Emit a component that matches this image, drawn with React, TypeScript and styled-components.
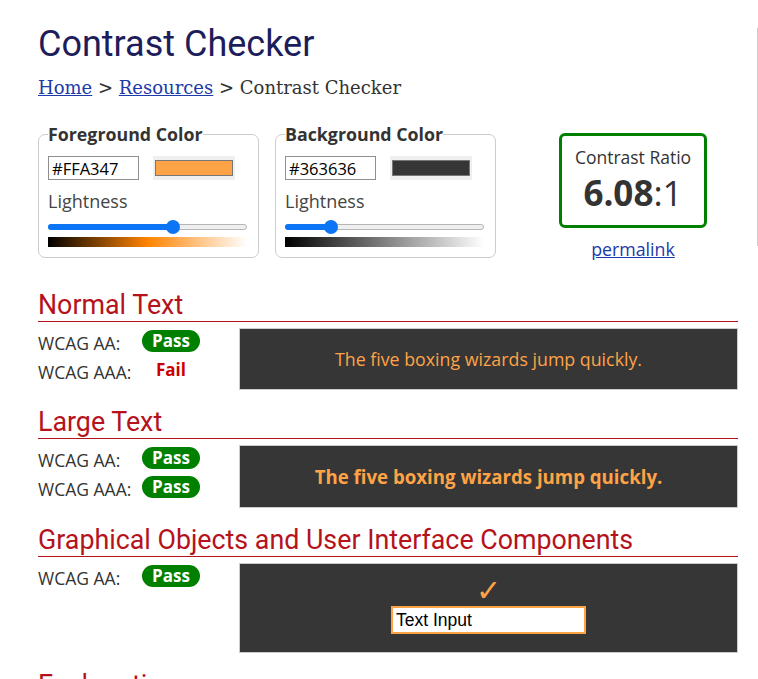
import React from 'react';
import styled, { createGlobalStyle } from 'styled-components';

const GlobalStyle = createGlobalStyle`
    body {
        margin: 0;
        background: #ffffff;
        font-family: "Open Sans", "Liberation Sans", sans-serif;
        color: #333333;
    }
`;

const Wrapper = styled.div`
    display: flex;
    align-items: flex-start;
`;

const Main = styled.main`
    width: 700px;
    margin-left: 38px;
    padding-top: 25px;
`;

const Sidebar = styled.aside`
    margin-top: 28px;
    margin-left: 19px;
    height: 218px;
    border-left: 1px solid #cccccc;
`;

const Title = styled.h1`
    margin: 0;
    font-family: Roboto, "Liberation Sans", sans-serif;
    font-weight: 400;
    font-size: 36px;
    line-height: 38px;
    color: #1d1d5c;
`;

const Crumbs = styled.nav`
    margin-top: 13px;
    font-family: "DejaVu Serif", "Liberation Serif", serif;
    font-size: 18px;
    line-height: 24px;
    color: #333333;
    a {
        color: #1c3aa9;
    }
`;

const Tools = styled.div`
    display: flex;
    align-items: flex-start;
    gap: 16px;
    margin-top: 22px;
`;

const Picker = styled.fieldset`
    margin: 0;
    width: 201px;
    padding: 10px 9px 10px;
    border: 1px solid #cccccc;
    border-radius: 7px;
    > legend {
        padding: 0;
        font-weight: 700;
        font-size: 17.8px;
        line-height: 24px;
        color: #333333;
    }
`;

const ColorRow = styled.div`
    display: flex;
    gap: 14px;
`;

const HexInput = styled.input`
    box-sizing: border-box;
    width: 91px;
    height: 24px;
    padding: 0 3px;
    border: 1px solid #8f8f8f;
    font-family: "Open Sans", sans-serif;
    font-size: 16.5px;
    color: #000000;
`;

const Swatch = styled.div<{ color: string }>`
    box-sizing: border-box;
    width: 82px;
    height: 24px;
    padding: 4px 2px;
    background: #efefef;
    > div {
        height: 100%;
        box-sizing: border-box;
        border: 1px solid #777777;
        background: ${({ color }) => color};
    }
`;

const Label = styled.div`
    margin-top: 9px;
    font-size: 18px;
    line-height: 24px;
    color: #444444;
`;

const Slider = styled.div`
    position: relative;
    height: 14px;
    margin-top: 7px;
    width: 199px;
`;

const Track = styled.div`
    position: absolute;
    left: 0;
    right: 0;
    top: 4px;
    height: 6px;
    box-sizing: border-box;
    border: 1px solid #b5b5b5;
    border-radius: 4px;
    background: #efefef;
`;

const Fill = styled.div`
    position: absolute;
    left: 0;
    top: 4px;
    height: 6px;
    border-radius: 4px;
    background: #0b75f5;
`;

const Thumb = styled.div`
    position: absolute;
    top: 0;
    width: 14px;
    height: 14px;
    margin-left: -7px;
    border-radius: 50%;
    background: #0b75f5;
`;

const Ramp = styled.div<{ mid: string }>`
    margin-top: 3px;
    height: 10px;
    width: 199px;
    background: linear-gradient(to right, #000000, ${({ mid }) => mid}, #ffffff);
`;

const RatioColumn = styled.div`
    margin-top: 11px;
    margin-left: 47px;
    width: 148px;
    text-align: center;
`;

const RatioBox = styled.div`
    border: 3px solid #008000;
    border-radius: 6px;
    padding: 10px 0;
    > p {
        margin: 0;
        font-size: 17.5px;
        line-height: 22px;
        color: #333333;
    }
    > .value {
        font-size: 35px;
        line-height: 44px;
        margin-top: 3px;
        b {
            font-weight: 700;
        }
    }
`;

const Permalink = styled.a`
    display: inline-block;
    margin-top: 10px;
    font-size: 17.8px;
    line-height: 22px;
    color: #1c3aa9;
`;

const Section = styled.section<{ first?: boolean }>`
    margin-top: ${({ first }) => (first ? '29px' : '17px')};
`;

const Heading = styled.h2`
    margin: 0;
    padding-bottom: 1px;
    border-bottom: 1px solid #b5121b;
    font-family: Roboto, "Liberation Sans", sans-serif;
    font-weight: 400;
    font-size: 26.8px;
    line-height: 30px;
    color: #b5121b;
`;

const Body = styled.div`
    display: flex;
    align-items: flex-start;
    margin-top: 6px;
`;

const Results = styled.div`
    display: grid;
    grid-template-columns: 104px 58px;
    grid-auto-rows: 29px;
    align-items: center;
    width: 201px;
    font-size: 17.5px;
    color: #333333;
`;

const Badge = styled.span<{ pass: boolean }>`
    display: block;
    width: 58px;
    height: 22px;
    margin-top: -3px;
    border-radius: 11px;
    text-align: center;
    font-weight: 700;
    font-size: 17px;
    line-height: 22px;
    color: ${({ pass }) => (pass ? '#ffffff' : '#cc0000')};
    background: ${({ pass }) => (pass ? '#008000' : 'transparent')};
`;

const Sample = styled.div<{ large?: boolean }>`
    flex: 1;
    display: flex;
    flex-direction: column;
    align-items: center;
    padding: 18px 0;
    border: 1px solid #cccccc;
    background: #363636;
    color: #ffa347;
    font-size: ${({ large }) => (large ? '18.67px' : '17.8px')};
    font-weight: ${({ large }) => (large ? 700 : 400)};
    line-height: ${({ large }) => (large ? '25px' : '24px')};
`;

const UiSample = styled(Sample)`
    padding: 14px 0 18px;
`;

const Check = styled.div`
    font-family: "DejaVu Sans", sans-serif;
    font-size: 30px;
    font-weight: 700;
    line-height: 26px;
    color: #ffa347;
`;

const DemoInput = styled.input`
    box-sizing: border-box;
    width: 195px;
    height: 28px;
    margin-top: 2px;
    padding: 0 3px;
    border: 2px solid #ffa347;
    background: #ffffff;
    font-family: "Liberation Sans", Arial, sans-serif;
    font-size: 17.5px;
    color: #000000;
    outline: none;
`;

interface PickerProps {
    legend: string;
    hex: string;
    lightness: number;
    mid: string;
}

const ColorPicker = ({ legend, hex, lightness, mid }: PickerProps) => {
    const x = 7 + lightness * (199 - 14);
    return (
        <Picker>
            <legend>{legend}</legend>
            <ColorRow>
                <HexInput defaultValue={hex} />
                <Swatch color={hex}><div /></Swatch>
            </ColorRow>
            <Label>Lightness</Label>
            <Slider>
                <Track />
                <Fill style={{ width: x }} />
                <Thumb style={{ left: x }} />
            </Slider>
            <Ramp mid={mid} />
        </Picker>
    );
};

interface ResultProps {
    rows: { label: string; pass: boolean }[];
}

const ResultList = ({ rows }: ResultProps) => (
    <Results>
        {rows.map((r) => (
            <React.Fragment key={r.label}>
                <span>{r.label}</span>
                <Badge pass={r.pass}>{r.pass ? 'Pass' : 'Fail'}</Badge>
            </React.Fragment>
        ))}
    </Results>
);

const pangram = 'The five boxing wizards jump quickly.';

export default function App() {
    return (
        <Wrapper>
            <GlobalStyle />
            <Main>
                <Title>Contrast Checker</Title>
                <Crumbs>
                    <a href="#">Home</a> &gt; <a href="#">Resources</a> &gt; Contrast Checker
                </Crumbs>
                <Tools>
                    <ColorPicker legend="Foreground Color" hex="#FFA347" lightness={0.639} mid="hsl(31, 100%, 50%)" />
                    <ColorPicker legend="Background Color" hex="#363636" lightness={0.212} mid="#808080" />
                    <RatioColumn>
                        <RatioBox>
                            <p>Contrast Ratio</p>
                            <p className="value"><b>6.08</b>:1</p>
                        </RatioBox>
                        <Permalink href="#">permalink</Permalink>
                    </RatioColumn>
                </Tools>

                <Section first>
                    <Heading>Normal Text</Heading>
                    <Body>
                        <ResultList rows={[{ label: 'WCAG AA:', pass: true }, { label: 'WCAG AAA:', pass: false }]} />
                        <Sample>{pangram}</Sample>
                    </Body>
                </Section>

                <Section>
                    <Heading>Large Text</Heading>
                    <Body>
                        <ResultList rows={[{ label: 'WCAG AA:', pass: true }, { label: 'WCAG AAA:', pass: true }]} />
                        <Sample large>{pangram}</Sample>
                    </Body>
                </Section>

                <Section>
                    <Heading>Graphical Objects and User Interface Components</Heading>
                    <Body>
                        <ResultList rows={[{ label: 'WCAG AA:', pass: true }]} />
                        <UiSample>
                            <Check>✓</Check>
                            <DemoInput defaultValue="Text Input" />
                        </UiSample>
                    </Body>
                </Section>

                <Section>
                    <Heading>Explanation</Heading>
                </Section>
            </Main>
            <Sidebar />
        </Wrapper>
    );
}
